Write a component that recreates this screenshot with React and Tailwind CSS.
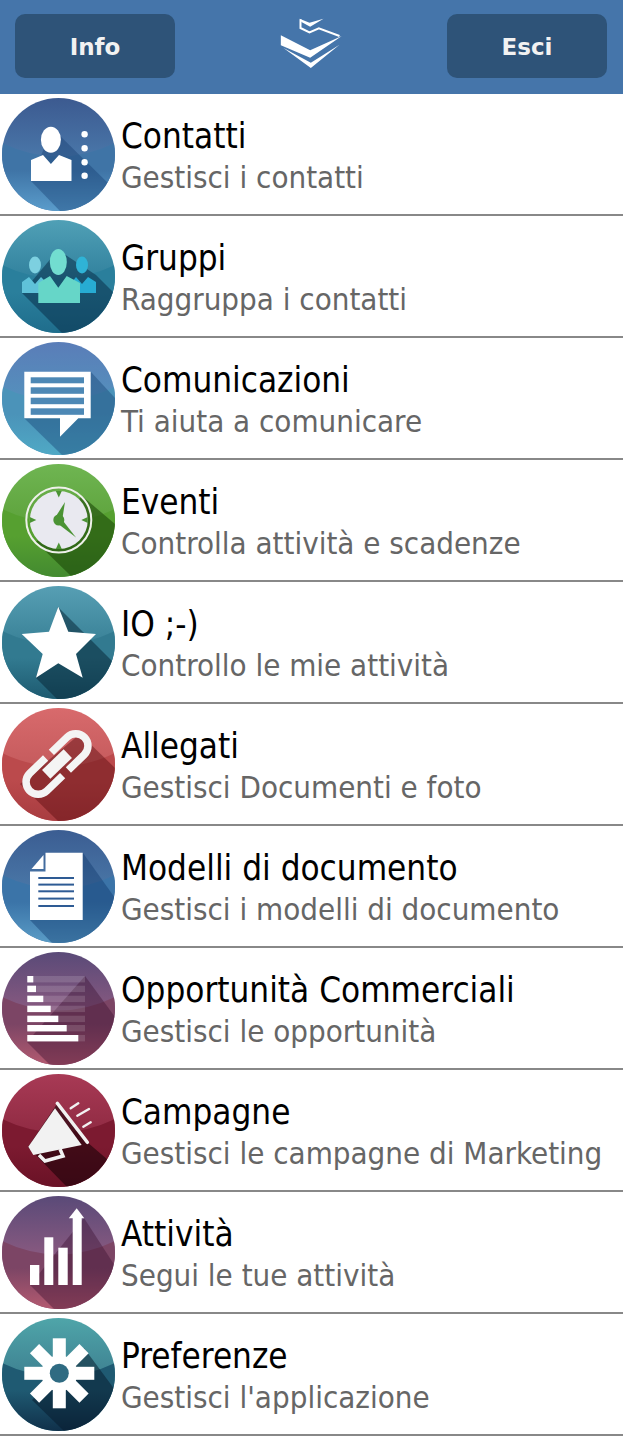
import React from "react";

const menu = [
  { title: "Contatti", sub: "Gestisci i contatti", c: ["#3c5a90", "#4a78aa", "#3f74a6", "#5a9ccb"], shadow: "M50 30 L113 92 L113 113 L58 113 L29 83 Z", sc: "#0d3468", s: 0.35, glyph: "contatti" },
  { title: "Gruppi", sub: "Raggruppa i contatti", c: ["#50a0b6", "#2f7f9c", "#2a7f9c", "#1f6d8c"], shadow: "M20 73 L60 113 L113 113 L113 74 L94 55 L56 30 Z", sc: "#0a2f4a", s: 0.55, glyph: "gruppi" },
  { title: "Comunicazioni", sub: "Ti aiuta a comunicare", c: ["#5a7db8", "#5492bd", "#4b93b9", "#4fa9c5"], shadow: "M22 76 L60 113 L113 113 L113 56 L89 30 Z", sc: "#1a4a7a", s: 0.45, glyph: "comunicazioni" },
  { title: "Eventi", sub: "Controlla attività e scadenze", c: ["#6fb552", "#5da23b", "#56a030", "#438a30"], shadow: "M34 78 L70 113 L113 113 L113 60 L80 32 Z", sc: "#1c4a08", s: 0.6, glyph: "eventi" },
  { title: "IO ;-)", sub: "Controllo le mie attività", c: ["#579fb4", "#377f95", "#327a90", "#1d5a70"], shadow: "M56 21 L113 78 L113 113 L55 113 L34 92 Z", sc: "#0a2a3a", s: 0.55, glyph: "io" },
  { title: "Allegati", sub: "Gestisci Documenti e foto", c: ["#d86a6c", "#c45a5c", "#bb4a4c", "#a83c40"], shadow: "M78 26 L113 60 L113 113 L56 113 L18 76 Z", sc: "#5c0a10", s: 0.45, glyph: "allegati" },
  { title: "Modelli di documento", sub: "Gestisci i modelli di documento", c: ["#3b5d92", "#4a78a8", "#3b74a8", "#5a9cc6"], shadow: "M28 90 L50 113 L113 113 L113 68 L81 23 Z", sc: "#0d3468", s: 0.4, glyph: "modelli" },
  { title: "Opportunità Commerciali", sub: "Gestisci le opportunità", c: ["#5a4a78", "#8a5a80", "#7c4565", "#b35a70"], shadow: "M25 90 L48 113 L113 113 L113 65 L83 24 Z", sc: "#3a1030", s: 0.4, glyph: "opportunita" },
  { title: "Campagne", sub: "Gestisci le campagne di Marketing", c: ["#a83a55", "#8f2a42", "#7c1a30", "#6a1226"], shadow: "M26 73 L65 113 L113 113 L113 92 L85 68 L55 30 Z", sc: "#1a0208", s: 0.6, glyph: "campagne" },
  { title: "Attività", sub: "Segui le tue attività", c: ["#5a4a78", "#8a5a80", "#7c4565", "#b35a70"], shadow: "M28 89 L52 113 L113 113 L113 70 L82 22 Z", sc: "#3a1030", s: 0.4, glyph: "attivita" },
  { title: "Preferenze", sub: "Gestisci l'applicazione", c: ["#4fa5a9", "#3d7f90", "#1f5a72", "#10304a"], shadow: "M30 82 L62 113 L113 113 L113 72 L82 30 Z", sc: "#06182a", s: 0.5, glyph: "preferenze" },
];

function Glyph({ name }) {
  if (name === "contatti") {
    return (
      <g fill="#fff">
        <ellipse cx="48.9" cy="41.7" rx="10" ry="13" />
        <path d="M29 62 L41 57 L48.9 66 L57 57 L69.5 62 L69.5 83 L29 83 Z" />
        <circle cx="82.6" cy="36.3" r="3.2" />
        <circle cx="82.6" cy="50.3" r="3.2" />
        <circle cx="82.6" cy="64.3" r="3.2" />
        <circle cx="82.6" cy="77.7" r="3.2" />
      </g>
    );
  }
  if (name === "gruppi") {
    return (
      <g>
        <ellipse cx="33" cy="45" rx="6" ry="8.5" fill="#7dd0e0" />
        <path d="M20 62 L27 57 L33 64 L39 57 L44 62 L44 73 L20 73 Z" fill="#5fc2d9" />
        <ellipse cx="80" cy="45" rx="6" ry="8.5" fill="#2fb3d6" />
        <path d="M70 62 L74 57 L80 64 L86 57 L94 62 L94 73 L70 73 Z" fill="#27acd3" />
        <ellipse cx="56.3" cy="42" rx="8.5" ry="13" fill="#72ddd0" />
        <path d="M36.3 63 L48 56 L56.3 67.7 L64.7 56 L78 63 L78 83 L36.3 83 Z" fill="#66d6c8" />
      </g>
    );
  }
  if (name === "comunicazioni") {
    return (
      <g>
        <path d="M22.3 29.7 H88.7 V76.3 H76.3 L58 94.7 V76.3 H22.3 Z" fill="#fff" />
        <g fill="#4d88b5">
          <rect x="28.7" y="35.3" width="53.3" height="6" />
          <rect x="28.7" y="45.3" width="53.3" height="6.5" />
          <rect x="28.7" y="55.7" width="53.3" height="6.5" />
          <rect x="28.7" y="66.3" width="53.3" height="6.5" />
        </g>
      </g>
    );
  }
  if (name === "eventi") {
    return (
      <g>
        <circle cx="56.8" cy="56" r="32.5" fill="none" stroke="#eef0ea" strokeWidth="2" />
        <circle cx="56.8" cy="56" r="29" fill="#e9e9f0" />
        <g fill="#4b9334">
          <path d="M53.8 27 H59.8 L56.8 33.5 Z" />
          <path d="M53.8 85 H59.8 L56.8 78.5 Z" />
          <path d="M27.8 53 V59 L34.3 56 Z" />
          <path d="M85.8 53 V59 L79.3 56 Z" />
          <circle cx="56.8" cy="56" r="5.5" />
          <path d="M53.5 53 L63 38 L60 57 Z" />
          <path d="M55 59 L58 53 L74 73.6 Z" />
        </g>
      </g>
    );
  }
  if (name === "io") {
    return <path fill="#fff" d="M56.3 20.7 L66.3 45.7 L94 48 L74 68 L80.7 91.7 L56.3 77.3 L34 91.7 L40.7 68 L19.7 48 L47 45.7 Z" />;
  }
  if (name === "allegati") {
    return (
      <g transform="rotate(-44 55 56)">
        <path d="M51 43.75 H29 A12.25 12.25 0 0 0 29 68.25 H51" fill="none" stroke="#f4f4f4" strokeWidth="7.5" />
        <path d="M59 43.75 H81 A12.25 12.25 0 0 1 81 68.25 H59" fill="none" stroke="#f4f4f4" strokeWidth="7.5" />
        <rect x="40" y="50" width="30" height="12" fill="#f4f4f4" />
      </g>
    );
  }
  if (name === "modelli") {
    return (
      <g>
        <path d="M43.5 22.7 H80.7 V90 H28 V41.5 H43.5 Z" fill="#fff" />
        <path d="M29.5 39 L41.5 25 V39 Z" fill="#fff" />
        <g fill="#2e5b94">
          <rect x="36.3" y="47" width="35.7" height="2" />
          <rect x="36.3" y="53.6" width="35.7" height="2" />
          <rect x="36.3" y="60.3" width="35.7" height="2" />
          <rect x="36.3" y="67.6" width="35.7" height="2" />
          <rect x="36.3" y="75" width="35.7" height="2" />
        </g>
      </g>
    );
  }
  if (name === "opportunita") {
    const bars = [[24, 6], [33.7, 8.7], [43.7, 16], [53.7, 23.4], [63.7, 31], [73, 39.4], [83, 51]];
    return (
      <g>
        {bars.map(([y, w]) => (
          <g key={y}>
            <rect x="25.3" y={y} width="57.7" height="6.4" fill="#fff" opacity="0.14" />
            <rect x="25.3" y={y} width={w} height="6.4" fill="#fff" />
          </g>
        ))}
      </g>
    );
  }
  if (name === "campagne") {
    return (
      <g>
        <path d="M53 34.3 L79.7 71 L31.3 81 L26.3 72.7 Z" fill="#f2f2f2" />
        <path d="M55.3 29.3 L85.3 68.3" stroke="#f2f2f2" strokeWidth="3.5" strokeLinecap="round" fill="none" />
        <path d="M37 81 L43 87 L61 82 L58 75" stroke="#f2f2f2" strokeWidth="3.5" fill="none" />
        <g stroke="#f2f2f2" strokeWidth="2.4" strokeLinecap="round" fill="none">
          <path d="M68.7 34.3 L76.3 29.3" />
          <path d="M75.3 41.7 L87 35" />
          <path d="M81.3 52.7 L88.7 48.3" />
        </g>
      </g>
    );
  }
  if (name === "attivita") {
    return (
      <g fill="#fff">
        <rect x="28" y="69" width="9.3" height="20" />
        <rect x="42.3" y="41.3" width="9" height="47.7" />
        <rect x="56.3" y="51.7" width="9.4" height="37.3" />
        <rect x="70.7" y="22" width="9" height="67" />
        <path d="M74.7 12.3 L82.3 22.3 H66.8 Z" />
      </g>
    );
  }
  // preferenze
  return (
    <g>
      <g fill="#fff">
        {[0, 45, 90, 135].map((a) => (
          <rect key={a} x="50.8" y="20.3" width="13" height="70" transform={`rotate(${a} 57.3 55.3)`} />
        ))}
      </g>
      <circle cx="57.3" cy="55.3" r="18" fill="#fff" />
      <circle cx="57.3" cy="55.3" r="9.5" fill="#2f6b82" />
    </g>
  );
}

function Badge({ item, id }) {
  const [a, b, c, d] = item.c;
  return (
    <svg viewBox="0 0 113 113" className="w-[113px] h-[113px] shrink-0">
      <defs>
        <clipPath id={`clip-${id}`}>
          <circle cx="56.5" cy="56.5" r="56.5" />
        </clipPath>
        <linearGradient id={`top-${id}`} x1="0" y1="0" x2="0" y2="1">
          <stop offset="0" stopColor={a} />
          <stop offset="0.55" stopColor={b} />
        </linearGradient>
        <linearGradient id={`low-${id}`} x1="0" y1="0.4" x2="0" y2="1">
          <stop offset="0" stopColor={c} />
          <stop offset="1" stopColor={d} />
        </linearGradient>
      </defs>
      <g clipPath={`url(#clip-${id})`}>
        <rect width="113" height="113" fill={`url(#top-${id})`} />
        <path d="M0 45 Q56.5 72 113 45 V113 H0 Z" fill={`url(#low-${id})`} />
        <path d={item.shadow} fill={item.sc} opacity={item.s} />
      </g>
      <Glyph name={item.glyph} />
    </svg>
  );
}

export default function App() {
  return (
    <div className="w-[623px] bg-white font-['DejaVu_Sans_Condensed','Liberation_Sans',sans-serif]">
      <div className="h-[94px] bg-[#4575aa] flex items-start justify-between pl-[15px] pr-4 pt-[14px]">
        <button className="w-40 h-16 rounded-[10px] bg-[#2e5378] text-[#f2f2f2] text-[23px] font-bold font-['DejaVu_Sans',sans-serif] pt-[2px]">Info</button>
        <svg viewBox="60 38 185 150" className="w-[62px] h-[50px] mt-1">
          <path d="M121 42 V68 L148 81 L176 69 L238 92" fill="none" stroke="#fff" strokeWidth="6" />
          <path d="M118 40 L148 52 L190 40 L150 64 L124 50 Z" fill="#fff" />
          <path d="M62 90 L150 135 L245 92 L150 157 L62 120 Z" fill="#fff" />
          <path d="M70 128 L152 172 L238 118 L152 188 Z" fill="#fff" />
        </svg>
        <button className="w-40 h-16 rounded-[10px] bg-[#2e5378] text-[#f2f2f2] text-[23px] font-bold font-['DejaVu_Sans',sans-serif] pt-[2px]">Esci</button>
      </div>
      {menu.map((item, i) => (
        <div key={item.title} className="h-[122px] border-b-2 border-[#888888] flex items-center pl-[2px] gap-[6px]">
          <Badge item={item} id={i} />
          <div className="flex flex-col pt-1">
            <span className="text-[34.75px] leading-[41px] text-black">{item.title}</span>
            <span className="text-[31px] leading-[40px] text-[#666666]">{item.sub}</span>
          </div>
        </div>
      ))}
    </div>
  );
}
